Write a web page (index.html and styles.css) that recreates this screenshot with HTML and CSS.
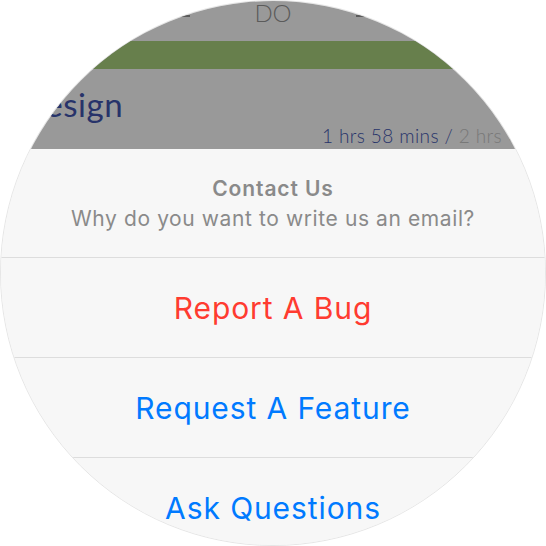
FILE: index.html
```html
<!DOCTYPE html>
<html>
<head>
<meta charset="utf-8">
<link rel="stylesheet" href="styles.css">
</head>
<body>
<div class="watch">
  <div class="backdrop">
    <div class="tabs">
      <span class="dash"></span>
      <span class="tab">DO</span>
      <span class="dash"></span>
    </div>
    <div class="progress"></div>
    <div class="task">
      <div class="task-name">Design</div>
      <div class="task-time">1 hrs 58 mins / <span class="muted">2 hrs &gt;</span></div>
    </div>
  </div>
  <div class="sheet">
    <div class="sheet-head">
      <div class="sheet-title">Contact Us</div>
      <div class="sheet-msg">Why do you want to write us an email?</div>
    </div>
    <div class="action danger">Report A Bug</div>
    <div class="action">Request A Feature</div>
    <div class="action">Ask Questions</div>
  </div>
</div>
</body>
</html>
```

FILE: styles.css
```css
html, body {
  margin: 0;
  padding: 0;
  background: #ffffff;
}

.watch {
  width: 546px;
  height: 546px;
  border-radius: 50%;
  overflow: hidden;
  background: #f7f7f7;
  box-sizing: border-box;
  border: 1px solid #e6e6e6;
  display: flex;
  flex-direction: column;
}

.backdrop {
  height: 148px;
  flex: none;
  background: #999999;
  overflow: hidden;
  font-family: Lato, "Open Sans", sans-serif;
}

.tabs {
  height: 40px;
  display: flex;
  align-items: flex-start;
  justify-content: center;
  gap: 64px;
}

.tab {
  font-size: 24px;
  font-weight: 300;
  color: #5b5b5b;
  line-height: 26px;
  margin-top: -1px;
}

.dash {
  width: 9px;
  height: 2px;
  background: #5b5b5b;
  margin-top: 14px;
}

.progress {
  height: 28px;
  background: #677f4c;
}

.task {
  padding: 15px 26px 0 19px;
}

.task-name {
  font-size: 33px;
  color: #27336a;
  line-height: 40px;
  letter-spacing: 0.5px;
}

.task-time {
  text-align: right;
  font-size: 19px;
  font-weight: 300;
  color: #27336a;
  white-space: nowrap;
  letter-spacing: 0.4px;
}

.muted {
  color: #787878;
}

.sheet {
  flex: 1;
  background: #f7f7f7;
  font-family: Inter, "Liberation Sans", sans-serif;
  text-align: center;
}

.sheet-head {
  height: 108px;
  box-sizing: border-box;
  padding-top: 27px;
}

.sheet-title {
  font-size: 21px;
  font-weight: 600;
  color: #8a8a8a;
  line-height: 26px;
  letter-spacing: 0.9px;
}

.sheet-msg {
  font-size: 21px;
  color: #8a8a8a;
  line-height: 34px;
  letter-spacing: 0.6px;
}

.action {
  height: 100px;
  box-sizing: border-box;
  border-top: 1px solid #dddddd;
  display: flex;
  align-items: center;
  justify-content: center;
  font-size: 30px;
  color: #007aff;
  letter-spacing: 0.9px;
}

.action.danger {
  color: #ff3b30;
}
```
